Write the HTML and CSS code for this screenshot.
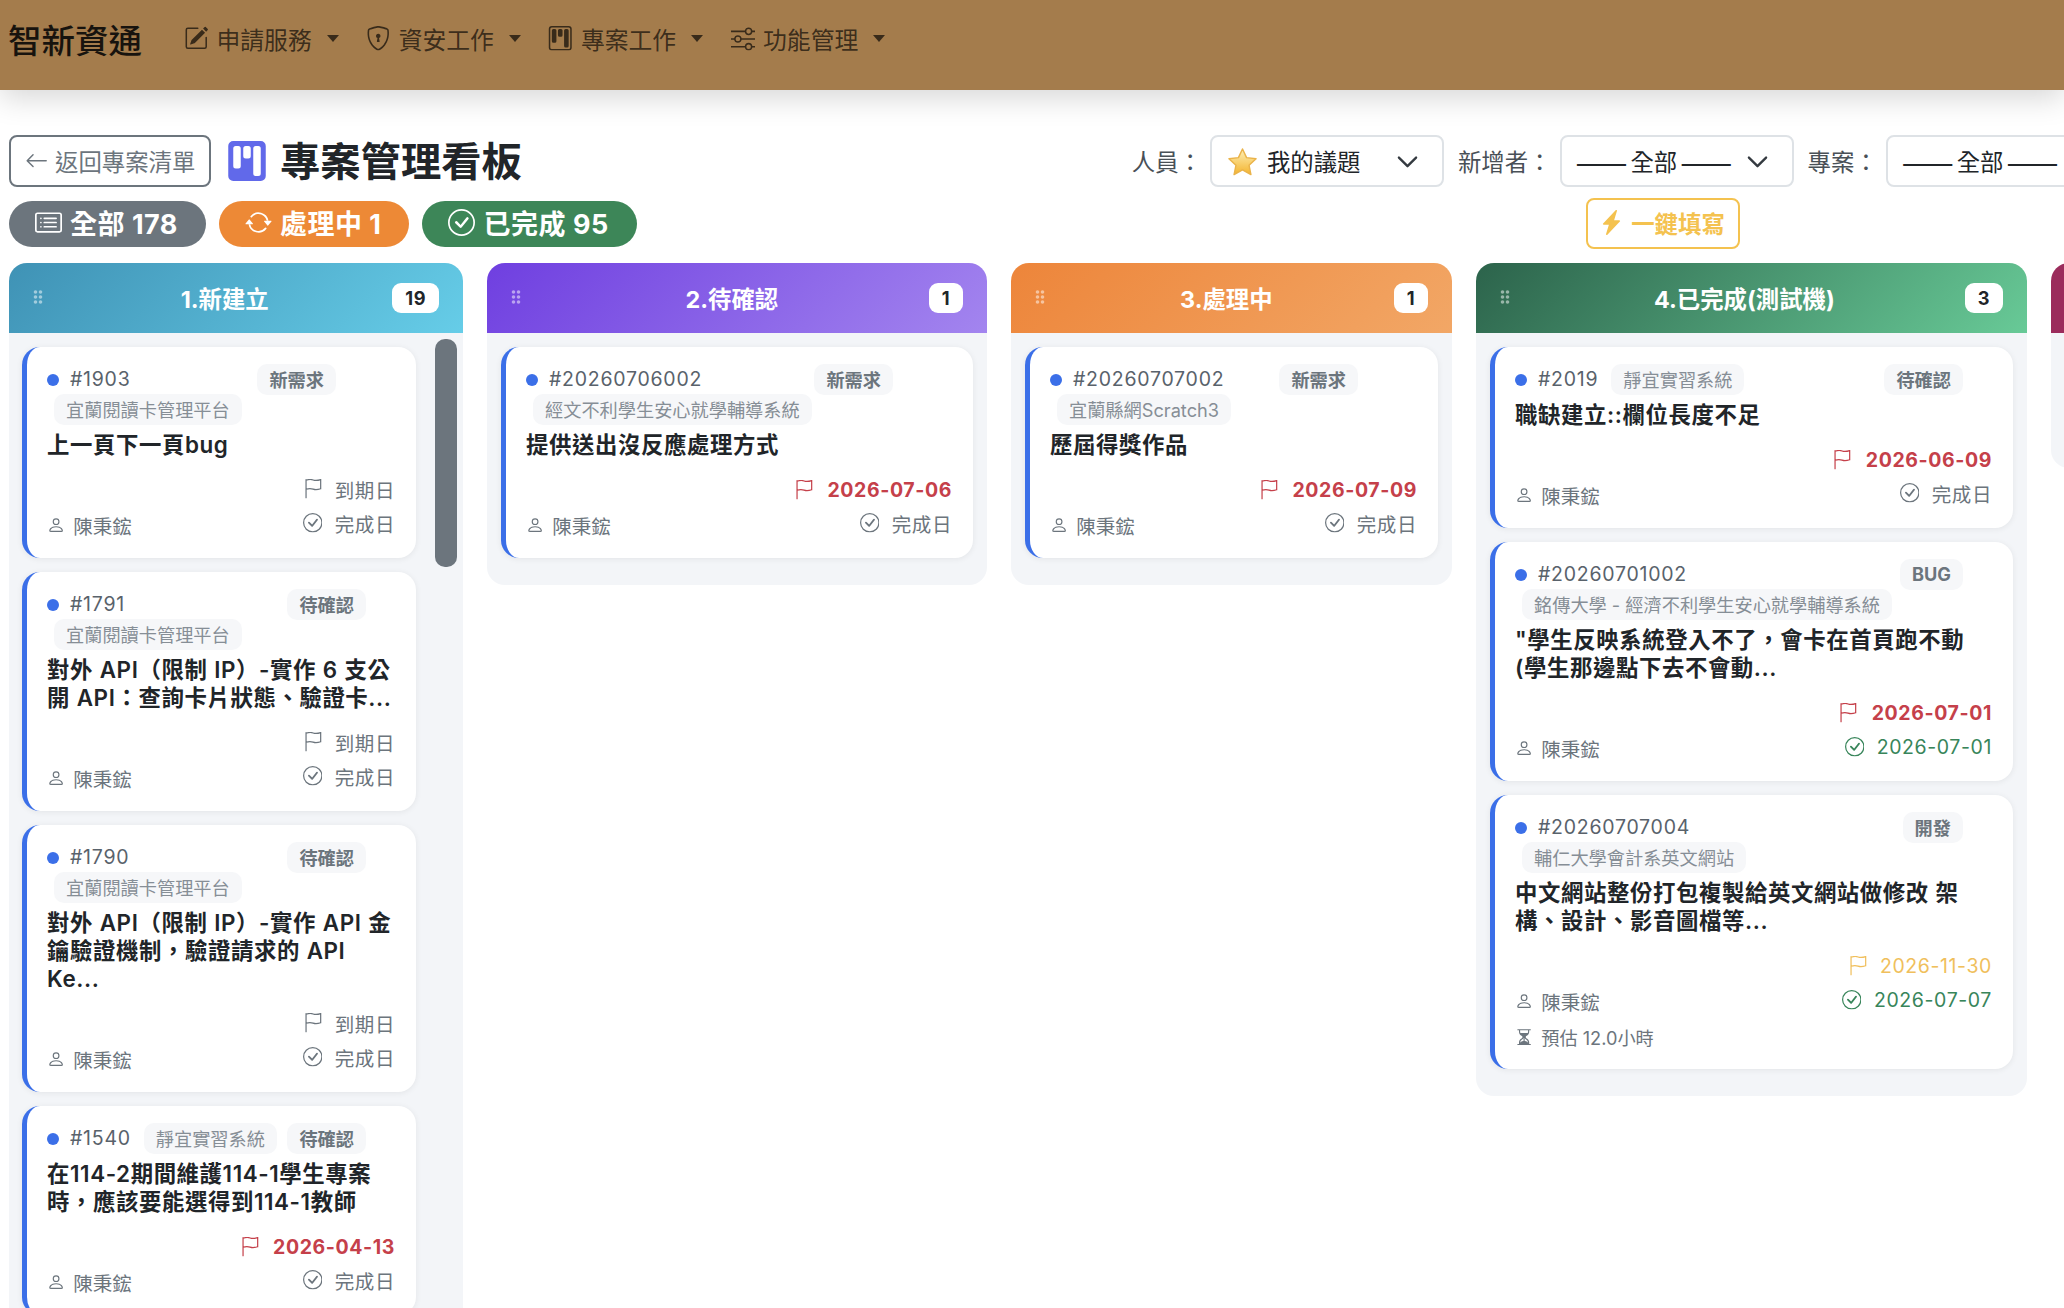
FILE: index.html
```html
<!DOCTYPE html>
<html lang="zh-Hant">
<head>
    <meta charset="UTF-8">
    <title>專案管理看板</title>
    <link rel="stylesheet" href="styles.css">
</head>
<body>
    <svg class="icon-defs" width="0" height="0">
        <symbol id="i-pencil" viewBox="0 0 16 16"><path d="M15.502 1.94a.5.5 0 0 1 0 .706L14.459 3.69l-2-2L13.502.646a.5.5 0 0 1 .707 0l1.293 1.293zm-1.75 2.456-2-2L4.939 9.21a.5.5 0 0 0-.121.196l-.805 2.414a.25.25 0 0 0 .316.316l2.414-.805a.5.5 0 0 0 .196-.12l6.813-6.814z"/><path fill-rule="evenodd" d="M1 13.5A1.5 1.5 0 0 0 2.5 15h11a1.5 1.5 0 0 0 1.5-1.5v-6a.5.5 0 0 0-1 0v6a.5.5 0 0 1-.5.5h-11a.5.5 0 0 1-.5-.5v-11a.5.5 0 0 1 .5-.5H9a.5.5 0 0 0 0-1H2.5A1.5 1.5 0 0 0 1 2.5z"/></symbol>
        <symbol id="i-shield" viewBox="0 0 16 16"><path d="M5.338 1.59a61 61 0 0 0-2.837.856.48.48 0 0 0-.328.39c-.554 4.157.726 7.19 2.253 9.188a10.7 10.7 0 0 0 2.287 2.233c.346.244.652.42.893.533q.18.085.293.118a1 1 0 0 0 .101.025 1 1 0 0 0 .1-.025q.114-.034.294-.118c.24-.113.547-.29.893-.533a10.7 10.7 0 0 0 2.287-2.233c1.527-1.997 2.807-5.031 2.253-9.188a.48.48 0 0 0-.328-.39c-.651-.213-1.75-.56-2.837-.855C9.552 1.29 8.531 1.067 8 1.067c-.53 0-1.552.223-2.662.524zM5.072.56C6.157.265 7.31 0 8 0s1.843.265 2.928.56c1.11.3 2.229.655 2.887.87a1.54 1.54 0 0 1 1.044 1.262c.596 4.477-.787 7.795-2.465 9.99a11.8 11.8 0 0 1-2.517 2.453 7 7 0 0 1-1.048.625c-.28.132-.581.24-.829.24s-.548-.108-.829-.24a7 7 0 0 1-1.048-.625 11.8 11.8 0 0 1-2.517-2.453C1.928 10.487.545 7.169 1.141 2.692A1.54 1.54 0 0 1 2.185 1.43 63 63 0 0 1 5.072.56"/><path d="M9.5 6.5a1.5 1.5 0 0 1-1 1.415l.385 1.99a.5.5 0 0 1-.491.595h-.788a.5.5 0 0 1-.49-.595l.384-1.99a1.5 1.5 0 1 1 2-1.415"/></symbol>
        <symbol id="i-kanban" viewBox="0 0 16 16"><path d="M13.5 1a1 1 0 0 1 1 1v12a1 1 0 0 1-1 1h-11a1 1 0 0 1-1-1V2a1 1 0 0 1 1-1zm-11-1a2 2 0 0 0-2 2v12a2 2 0 0 0 2 2h11a2 2 0 0 0 2-2V2a2 2 0 0 0-2-2z"/><path d="M6.5 3a1 1 0 0 1 1-1h1a1 1 0 0 1 1 1v3a1 1 0 0 1-1 1h-1a1 1 0 0 1-1-1zm-4 0a1 1 0 0 1 1-1h1a1 1 0 0 1 1 1v7a1 1 0 0 1-1 1h-1a1 1 0 0 1-1-1zm8 0a1 1 0 0 1 1-1h1a1 1 0 0 1 1 1v10a1 1 0 0 1-1 1h-1a1 1 0 0 1-1-1z"/></symbol>
        <symbol id="i-kanban-fill" viewBox="0 0 16 16"><path d="M2.5 0a2 2 0 0 0-2 2v12a2 2 0 0 0 2 2h11a2 2 0 0 0 2-2V2a2 2 0 0 0-2-2zm5 2h1a1 1 0 0 1 1 1v3a1 1 0 0 1-1 1h-1a1 1 0 0 1-1-1V3a1 1 0 0 1 1-1m-5 1a1 1 0 0 1 1-1h1a1 1 0 0 1 1 1v7a1 1 0 0 1-1 1h-1a1 1 0 0 1-1-1zm9-1h1a1 1 0 0 1 1 1v10a1 1 0 0 1-1 1h-1a1 1 0 0 1-1-1V3a1 1 0 0 1 1-1"/></symbol>
        <symbol id="i-sliders" viewBox="0 0 16 16"><path fill-rule="evenodd" d="M11.5 2a1.5 1.5 0 1 0 0 3 1.5 1.5 0 0 0 0-3M9.05 3a2.5 2.5 0 0 1 4.9 0H16v1h-2.05a2.5 2.5 0 0 1-4.9 0H0V3zM4.5 7a1.5 1.5 0 1 0 0 3 1.5 1.5 0 0 0 0-3M2.05 8a2.5 2.5 0 0 1 4.9 0H16v1H6.95a2.5 2.5 0 0 1-4.9 0H0V8zm9.45 4a1.5 1.5 0 1 0 0 3 1.5 1.5 0 0 0 0-3m-2.45 1a2.5 2.5 0 0 1 4.9 0H16v1h-2.05a2.5 2.5 0 0 1-4.9 0H0v-1z"/></symbol>
        <symbol id="i-back" viewBox="0 0 16 16"><path fill-rule="evenodd" d="M15 8a.5.5 0 0 0-.5-.5H2.707l3.147-3.146a.5.5 0 1 0-.708-.708l-4 4a.5.5 0 0 0 0 .708l4 4a.5.5 0 0 0 .708-.708L2.707 8.5H14.5A.5.5 0 0 0 15 8"/></symbol>
        <symbol id="i-list" viewBox="0 0 16 16"><path d="M14.5 3a.5.5 0 0 1 .5.5v9a.5.5 0 0 1-.5.5h-13a.5.5 0 0 1-.5-.5v-9a.5.5 0 0 1 .5-.5zm-13-1A1.5 1.5 0 0 0 0 3.5v9A1.5 1.5 0 0 0 1.5 14h13a1.5 1.5 0 0 0 1.5-1.5v-9A1.5 1.5 0 0 0 14.5 2z"/><path d="M5 8a.5.5 0 0 1 .5-.5h7a.5.5 0 0 1 0 1h-7A.5.5 0 0 1 5 8m0-2.5a.5.5 0 0 1 .5-.5h7a.5.5 0 0 1 0 1h-7a.5.5 0 0 1-.5-.5m0 5a.5.5 0 0 1 .5-.5h7a.5.5 0 0 1 0 1h-7a.5.5 0 0 1-.5-.5m-1-5a.5.5 0 1 1-1 0 .5.5 0 0 1 1 0M4 8a.5.5 0 1 1-1 0 .5.5 0 0 1 1 0m0 2.5a.5.5 0 1 1-1 0 .5.5 0 0 1 1 0"/></symbol>
        <symbol id="i-repeat" viewBox="0 0 16 16"><path d="M11.534 7h3.932a.25.25 0 0 1 .192.41l-1.966 2.36a.25.25 0 0 1-.384 0l-1.966-2.36a.25.25 0 0 1 .192-.41m-11 2h3.932a.25.25 0 0 0 .192-.41L2.692 6.23a.25.25 0 0 0-.384 0L.342 8.59A.25.25 0 0 0 .534 9"/><path fill-rule="evenodd" d="M8 3c-1.552 0-2.94.707-3.857 1.818a.5.5 0 1 1-.771-.636A6.002 6.002 0 0 1 13.917 7H12.9A5 5 0 0 0 8 3M3.1 9a5.002 5.002 0 0 0 8.757 2.182.5.5 0 1 1 .771.636A6.002 6.002 0 0 1 2.083 9z"/></symbol>
        <symbol id="i-check" viewBox="0 0 16 16"><path d="M8 15A7 7 0 1 1 8 1a7 7 0 0 1 0 14m0 1A8 8 0 1 0 8 0a8 8 0 0 0 0 16"/><path d="m10.97 4.97-.02.022-3.473 4.425-2.093-2.094a.75.75 0 0 0-1.06 1.06L6.97 11.03a.75.75 0 0 0 1.079-.02l3.992-4.99a.75.75 0 0 0-1.071-1.05"/></symbol>
        <symbol id="i-flag" viewBox="0 0 16 16"><path fill="none" stroke="currentColor" stroke-width="1" stroke-linecap="round" d="M2.5 15.5V.5M2.5 1C5 .2 6.5.1 8.3.8s3.5.6 6.2-.3V8c-2.7.9-4.4 1-6.2.3S5 7.5 2.5 8.4"/></symbol>
        <symbol id="i-person" viewBox="0 0 16 16"><path d="M8 8a3 3 0 1 0 0-6 3 3 0 0 0 0 6m2-3a2 2 0 1 1-4 0 2 2 0 0 1 4 0m4 8c0 1-1 1-1 1H3s-1 0-1-1 1-4 6-4 6 3 6 4m-1-.004c-.001-.246-.154-.986-.832-1.664C11.516 10.68 10.289 10 8 10s-3.516.68-4.168 1.332c-.678.678-.83 1.418-.832 1.664z"/></symbol>
        <symbol id="i-hourglass" viewBox="0 0 16 16"><path d="M2.5 15a.5.5 0 1 1 0-1h1v-1a4.5 4.5 0 0 1 2.557-4.06c.29-.139.443-.377.443-.59v-.7c0-.213-.154-.451-.443-.59A4.5 4.5 0 0 1 3.5 3V2h-1a.5.5 0 0 1 0-1h11a.5.5 0 0 1 0 1h-1v1a4.5 4.5 0 0 1-2.557 4.06c-.29.139-.443.377-.443.59v.7c0 .213.154.451.443.59A4.5 4.5 0 0 1 12.5 13v1h1a.5.5 0 0 1 0 1zm2-13v1c0 .537.12 1.045.337 1.5h6.326c.216-.455.337-.963.337-1.5V2zm3 6.35c0 .701-.478 1.236-1.011 1.492A3.5 3.5 0 0 0 4.5 13s.866-1.299 3-1.48zm1 0v3.17c2.134.181 3 1.48 3 1.48a3.5 3.5 0 0 0-1.989-3.158C8.978 9.586 8.5 9.052 8.5 8.351z"/></symbol>
        <symbol id="i-bolt" viewBox="0 0 16 16"><path d="M11.251.068a.5.5 0 0 1 .227.58L9.677 6.5H13a.5.5 0 0 1 .364.843l-8 8.5a.5.5 0 0 1-.842-.49L6.323 9.5H3a.5.5 0 0 1-.364-.843l8-8.5a.5.5 0 0 1 .615-.09z"/></symbol>
        <symbol id="i-grip" viewBox="0 0 10 16"><circle cx="2.5" cy="3" r="1.8"/><circle cx="7.5" cy="3" r="1.8"/><circle cx="2.5" cy="8" r="1.8"/><circle cx="7.5" cy="8" r="1.8"/><circle cx="2.5" cy="13" r="1.8"/><circle cx="7.5" cy="13" r="1.8"/></symbol>
        <symbol id="i-chevron" viewBox="0 0 16 16"><path fill="none" stroke="currentColor" stroke-width="1.5" stroke-linecap="round" stroke-linejoin="round" d="M2.5 5.5 8 11l5.5-5.5"/></symbol>
        <linearGradient id="star-fill" x1="0" y1="0" x2="0" y2="1"><stop offset="0" stop-color="#fdf0b8"/><stop offset="1" stop-color="#f4b42e"/></linearGradient>
    </svg>

    <nav class="navbar">
        <span class="brand">智新資通</span>
        <a class="nav-item"><svg class="nav-icon"><use href="#i-pencil"/></svg>申請服務<i class="caret"></i></a>
        <a class="nav-item"><svg class="nav-icon"><use href="#i-shield"/></svg>資安工作<i class="caret"></i></a>
        <a class="nav-item"><svg class="nav-icon"><use href="#i-kanban"/></svg>專案工作<i class="caret"></i></a>
        <a class="nav-item"><svg class="nav-icon"><use href="#i-sliders"/></svg>功能管理<i class="caret"></i></a>
    </nav>

    <main class="page">
        <div class="toolbar">
            <a class="back-btn"><svg class="btn-icon"><use href="#i-back"/></svg>返回專案清單</a>
            <svg class="title-icon"><use href="#i-kanban-fill"/></svg>
            <h1 class="page-title">專案管理看板</h1>
            <div class="filters">
                <label class="filter-label">人員：</label>
                <div class="select select-person">
                    <svg class="star" viewBox="0 0 32 30"><polygon points="16,2 20.2,11 30,12.2 22.8,18.9 24.7,28.5 16,23.7 7.3,28.5 9.2,18.9 2,12.2 11.8,11" fill="url(#star-fill)" stroke="#eab34a" stroke-width="1.5" stroke-linejoin="round"/></svg>
                    <span>我的議題</span>
                    <svg class="chevron"><use href="#i-chevron"/></svg>
                </div>
                <label class="filter-label">新增者：</label>
                <div class="select select-all">
                    <span class="dash">——</span><span>全部</span><span class="dash">——</span>
                    <svg class="chevron"><use href="#i-chevron"/></svg>
                </div>
                <label class="filter-label">專案：</label>
                <div class="select select-all">
                    <span class="dash">——</span><span>全部</span><span class="dash">——</span>
                    <svg class="chevron"><use href="#i-chevron"/></svg>
                </div>
            </div>
        </div>

        <div class="status-row">
            <a class="pill pill-gray"><svg class="pill-icon"><use href="#i-list"/></svg>全部 178</a>
            <a class="pill pill-orange"><svg class="pill-icon"><use href="#i-repeat"/></svg>處理中 1</a>
            <a class="pill pill-green"><svg class="pill-icon"><use href="#i-check"/></svg>已完成 95</a>
            <a class="fill-btn"><svg class="bolt-icon"><use href="#i-bolt"/></svg>一鍵填寫</a>
        </div>

        <div class="board">
            <section class="column col-new">
                <header class="col-head">
                    <svg class="grip"><use href="#i-grip"/></svg>
                    <h2 class="col-title">1.新建立</h2>
                    <span class="count">19</span>
                </header>
                <div class="col-body">
                    <article class="card">
                        <div class="card-head"><i class="dot"></i><span class="card-id">#1903</span><span class="status status-wide">新需求</span></div>
                        <div class="project project-row">宜蘭閱讀卡管理平台</div>
                        <h3 class="card-title">上一頁下一頁bug</h3>
                        <div class="date-row"><svg class="date-icon"><use href="#i-flag"/></svg>到期日</div>
                        <div class="foot"><span class="owner"><svg class="owner-icon"><use href="#i-person"/></svg>陳秉鋐</span><span class="date-row"><svg class="date-icon"><use href="#i-check"/></svg>完成日</span></div>
                    </article>
                    <article class="card">
                        <div class="card-head"><i class="dot"></i><span class="card-id">#1791</span><span class="status">待確認</span></div>
                        <div class="project project-row">宜蘭閱讀卡管理平台</div>
                        <h3 class="card-title">對外 API（限制 IP）-實作 6 支公開 API：查詢卡片狀態、驗證卡...</h3>
                        <div class="date-row"><svg class="date-icon"><use href="#i-flag"/></svg>到期日</div>
                        <div class="foot"><span class="owner"><svg class="owner-icon"><use href="#i-person"/></svg>陳秉鋐</span><span class="date-row"><svg class="date-icon"><use href="#i-check"/></svg>完成日</span></div>
                    </article>
                    <article class="card">
                        <div class="card-head"><i class="dot"></i><span class="card-id">#1790</span><span class="status">待確認</span></div>
                        <div class="project project-row">宜蘭閱讀卡管理平台</div>
                        <h3 class="card-title">對外 API（限制 IP）-實作 API 金鑰驗證機制，驗證請求的 API Ke...</h3>
                        <div class="date-row"><svg class="date-icon"><use href="#i-flag"/></svg>到期日</div>
                        <div class="foot"><span class="owner"><svg class="owner-icon"><use href="#i-person"/></svg>陳秉鋐</span><span class="date-row"><svg class="date-icon"><use href="#i-check"/></svg>完成日</span></div>
                    </article>
                    <article class="card">
                        <div class="card-head"><i class="dot"></i><span class="card-id">#1540</span><span class="project">靜宜實習系統</span><span class="status">待確認</span></div>
                        <h3 class="card-title">在114-2期間維護114-1學生專案時，應該要能選得到114-1教師</h3>
                        <div class="date-row date-overdue"><svg class="date-icon"><use href="#i-flag"/></svg>2026-04-13</div>
                        <div class="foot"><span class="owner"><svg class="owner-icon"><use href="#i-person"/></svg>陳秉鋐</span><span class="date-row"><svg class="date-icon"><use href="#i-check"/></svg>完成日</span></div>
                    </article>
                </div>
                <div class="scroll-thumb"></div>
            </section>

            <section class="column col-confirm">
                <header class="col-head">
                    <svg class="grip"><use href="#i-grip"/></svg>
                    <h2 class="col-title">2.待確認</h2>
                    <span class="count">1</span>
                </header>
                <div class="col-body">
                    <article class="card">
                        <div class="card-head"><i class="dot"></i><span class="card-id">#20260706002</span><span class="status status-wide">新需求</span></div>
                        <div class="project project-row">經文不利學生安心就學輔導系統</div>
                        <h3 class="card-title">提供送出沒反應處理方式</h3>
                        <div class="date-row date-overdue"><svg class="date-icon"><use href="#i-flag"/></svg>2026-07-06</div>
                        <div class="foot"><span class="owner"><svg class="owner-icon"><use href="#i-person"/></svg>陳秉鋐</span><span class="date-row"><svg class="date-icon"><use href="#i-check"/></svg>完成日</span></div>
                    </article>
                </div>
            </section>

            <section class="column col-doing">
                <header class="col-head">
                    <svg class="grip"><use href="#i-grip"/></svg>
                    <h2 class="col-title">3.處理中</h2>
                    <span class="count">1</span>
                </header>
                <div class="col-body">
                    <article class="card">
                        <div class="card-head"><i class="dot"></i><span class="card-id">#20260707002</span><span class="status status-wide">新需求</span></div>
                        <div class="project project-row">宜蘭縣網Scratch3</div>
                        <h3 class="card-title">歷屆得獎作品</h3>
                        <div class="date-row date-overdue"><svg class="date-icon"><use href="#i-flag"/></svg>2026-07-09</div>
                        <div class="foot"><span class="owner"><svg class="owner-icon"><use href="#i-person"/></svg>陳秉鋐</span><span class="date-row"><svg class="date-icon"><use href="#i-check"/></svg>完成日</span></div>
                    </article>
                </div>
            </section>

            <section class="column col-done">
                <header class="col-head">
                    <svg class="grip"><use href="#i-grip"/></svg>
                    <h2 class="col-title">4.已完成(測試機)</h2>
                    <span class="count">3</span>
                </header>
                <div class="col-body">
                    <article class="card">
                        <div class="card-head"><i class="dot"></i><span class="card-id">#2019</span><span class="project">靜宜實習系統</span><span class="status">待確認</span></div>
                        <h3 class="card-title">職缺建立::欄位長度不足</h3>
                        <div class="date-row date-overdue"><svg class="date-icon"><use href="#i-flag"/></svg>2026-06-09</div>
                        <div class="foot"><span class="owner"><svg class="owner-icon"><use href="#i-person"/></svg>陳秉鋐</span><span class="date-row"><svg class="date-icon"><use href="#i-check"/></svg>完成日</span></div>
                    </article>
                    <article class="card">
                        <div class="card-head"><i class="dot"></i><span class="card-id">#20260701002</span><span class="status">BUG</span></div>
                        <div class="project project-row">銘傳大學 - 經濟不利學生安心就學輔導系統</div>
                        <h3 class="card-title">"學生反映系統登入不了，會卡在首頁跑不動<br>(學生那邊點下去不會動...</h3>
                        <div class="date-row date-overdue"><svg class="date-icon"><use href="#i-flag"/></svg>2026-07-01</div>
                        <div class="foot"><span class="owner"><svg class="owner-icon"><use href="#i-person"/></svg>陳秉鋐</span><span class="date-row date-done"><svg class="date-icon"><use href="#i-check"/></svg>2026-07-01</span></div>
                    </article>
                    <article class="card">
                        <div class="card-head"><i class="dot"></i><span class="card-id">#20260707004</span><span class="status">開發</span></div>
                        <div class="project project-row">輔仁大學會計系英文網站</div>
                        <h3 class="card-title">中文網站整份打包複製給英文網站做修改 架構、設計、影音圖檔等...</h3>
                        <div class="date-row date-soon"><svg class="date-icon"><use href="#i-flag"/></svg>2026-11-30</div>
                        <div class="foot"><span class="owner"><svg class="owner-icon"><use href="#i-person"/></svg>陳秉鋐</span><span class="date-row date-done"><svg class="date-icon"><use href="#i-check"/></svg>2026-07-07</span></div>
                        <div class="estimate"><svg class="owner-icon"><use href="#i-hourglass"/></svg>預估 12.0小時</div>
                    </article>
                </div>
            </section>

            <section class="column col-next">
                <header class="col-head"></header>
                <div class="col-body"></div>
            </section>
        </div>
    </main>
</body>
</html>
```

FILE: styles.css
```css
/* page */
:root {
    --gray: #6c757d;
    --text: #212529;
    --blue: #3b6fe8;
    --col-bg: #f3f5f8;
}

* {
    margin: 0;
    padding: 0;
    box-sizing: border-box;
}

body {
    width: 100vw;
    height: 100vh;
    overflow: hidden;
    background: #fff;
    color: var(--text);
    font-family: Inter, "Noto Sans CJK TC", sans-serif;
    font-size: 18.2px;
}

.icon-defs {
    position: absolute;
}

svg {
    fill: currentColor;
    flex-shrink: 0;
}

/* navbar */
.navbar {
    height: 90px;
    padding: 0 8px 13px;
    display: flex;
    align-items: center;
    background: #a47c4c;
    color: rgba(0, 0, 0, 0.65);
    font-size: 23.8px;
    box-shadow: 0 8px 28px rgba(0, 0, 0, 0.16);
}

.brand {
    margin-right: 42px;
    font-size: 33.5px;
    font-weight: 500;
    color: #17130e;
}

.nav-item {
    display: flex;
    align-items: center;
    margin-right: 27.5px;
}

.nav-icon {
    width: 24.5px;
    height: 24.5px;
    margin-right: 8px;
}

.caret {
    width: 0;
    height: 0;
    margin-left: 15px;
    border-top: 7px solid currentColor;
    border-left: 6.5px solid transparent;
    border-right: 6.5px solid transparent;
}

/* toolbar */
.page {
    padding: 45px 9px 0;
}

.toolbar {
    display: flex;
    align-items: center;
    white-space: nowrap;
    font-size: 23.4px;
}

.back-btn {
    height: 52px;
    width: 202px;
    flex-shrink: 0;
    display: flex;
    align-items: center;
    justify-content: center;
    gap: 7px;
    border: 2px solid var(--gray);
    border-radius: 8px;
    color: var(--gray);
}

.btn-icon {
    width: 23.4px;
    height: 23.4px;
}

.title-icon {
    width: 40px;
    height: 40px;
    margin-left: 16px;
    color: #6169ea;
}

.page-title {
    margin-left: 13px;
    padding-top: 2px;
    font-size: 40.3px;
    line-height: 50px;
    font-weight: 700;
}

.filters {
    margin-left: 610px;
    display: flex;
    align-items: center;
    flex-shrink: 0;
}

.filter-label {
    color: #495057;
}

.select {
    height: 52px;
    width: 234px;
    margin: 0 14px 0 8px;
    padding: 0 22px 0 20px;
    flex-shrink: 0;
    display: flex;
    align-items: center;
    border: 2px solid #dee2e6;
    border-radius: 8px;
    color: var(--text);
}

.select-all {
    padding-left: 14px;
    gap: 3px;
}

.dash {
    font-family: "Noto Sans CJK TC", sans-serif;
    font-size: 31px;
    line-height: 40px;
}

.star {
    width: 31px;
    height: 29px;
    margin-right: 9px;
    margin-left: -5px;
}

.chevron {
    width: 25px;
    height: 25px;
    margin-left: auto;
    color: #343a40;
}

/* status row */
.status-row {
    margin-top: 11px;
    display: flex;
    align-items: center;
    gap: 13px;
    white-space: nowrap;
}

.pill {
    height: 46px;
    padding: 0 28px 2px 26px;
    display: flex;
    align-items: center;
    gap: 8px;
    border-radius: 23px;
    color: #fff;
    font-size: 27px;
    font-weight: 700;
    letter-spacing: 0.5px;
}

.pill-icon {
    width: 27px;
    height: 27px;
}

.pill-gray {
    background: var(--gray);
}

.pill-orange {
    background: #ed8936;
}

.pill-green {
    background: #3d8658;
}

.fill-btn {
    height: 51px;
    width: 154px;
    margin-left: auto;
    margin-right: 315px;
    padding-bottom: 2px;
    display: flex;
    align-items: center;
    justify-content: center;
    gap: 7px;
    border: 2px solid #f4c24f;
    border-radius: 8px;
    color: #f4c24f;
    font-size: 23.4px;
    font-weight: 700;
}

.bolt-icon {
    width: 25px;
    height: 25px;
    margin-left: -2px;
}

/* board */
.board {
    margin-top: 14px;
    display: flex;
    align-items: flex-start;
    gap: 24px;
}

.column {
    position: relative;
    flex-shrink: 0;
}

.col-new {
    width: 454px;
}

.col-confirm {
    width: 500px;
}

.col-doing {
    width: 441px;
}

.col-done {
    width: 551px;
}

.col-next {
    width: 400px;
}

.col-head {
    height: 70px;
    padding: 0 24px;
    display: flex;
    align-items: center;
    border-radius: 18px 18px 0 0;
    color: #fff;
}

.col-new .col-head {
    background: linear-gradient(135deg, #3f92b5, #66cde8);
}

.col-confirm .col-head {
    background: linear-gradient(135deg, #6f3fe0, #a385ef);
}

.col-doing .col-head {
    background: linear-gradient(135deg, #ed853a, #f2a766);
}

.col-done .col-head {
    background: linear-gradient(135deg, #2c634b, #68ca97);
}

.col-next .col-head {
    background: #9b2c5c;
}

.grip {
    width: 10px;
    height: 16px;
    opacity: 0.5;
    margin-top: -3px;
}

.col-title {
    flex: 1;
    margin-left: 14px;
    text-align: center;
    font-size: 23.4px;
    font-weight: 700;
}

.count {
    height: 30px;
    min-width: 34px;
    padding: 0 13px;
    display: flex;
    align-items: center;
    justify-content: center;
    border-radius: 9px;
    background: #fff;
    color: var(--text);
    font-size: 18.2px;
    font-weight: 700;
    letter-spacing: 0.5px;
}

.col-body {
    padding: 14px 14px 27px;
    display: flex;
    flex-direction: column;
    gap: 14px;
    background: var(--col-bg);
    border-radius: 0 0 18px 18px;
}

.col-new .col-body {
    padding: 14px 47px 27px 13px;
}

.col-next .col-body {
    height: 135px;
}

.scroll-thumb {
    position: absolute;
    top: 76px;
    right: 6px;
    width: 22px;
    height: 228px;
    border-radius: 10px;
    background: var(--gray);
}

/* cards */
.card {
    padding: 17px 21px 17px 20px;
    background: #fff;
    border-left: 5px solid var(--blue);
    border-radius: 18px;
    box-shadow: 0 1px 6px rgba(0, 0, 0, 0.07);
}

.card-head {
    height: 31px;
    display: flex;
    align-items: center;
}

.dot {
    width: 12px;
    height: 12px;
    margin-right: 11px;
    border-radius: 50%;
    background: var(--blue);
}

.card-id {
    padding-bottom: 2px;
    font-size: 19.5px;
    letter-spacing: 0.75px;
    color: #59626b;
}

.status,
.project {
    height: 31px;
    padding: 0 12px 2px;
    display: flex;
    align-items: center;
    border-radius: 10px;
    background: #f6f7f9;
    color: var(--gray);
    white-space: nowrap;
}

.status {
    margin-left: auto;
    margin-right: 29px;
    font-weight: 700;
}

.status-wide {
    margin-right: 59px;
}

.project {
    margin-left: 13px;
    color: #868e96;
}

.project-row {
    width: fit-content;
    margin: -1px 0 0 7px;
}

.card-title {
    margin-top: 6px;
    font-size: 22.4px;
    line-height: 28px;
    font-weight: 600;
    letter-spacing: 0.6px;
    word-spacing: 0.5px;
    color: var(--text);
}

.date-row {
    height: 34px;
    padding-bottom: 2px;
    display: flex;
    align-items: center;
    justify-content: flex-end;
    gap: 12.5px;
    font-size: 19.5px;
    letter-spacing: 0.6px;
    color: var(--gray);
}

.card-title + .date-row {
    margin-top: 14px;
}

.date-icon {
    width: 19.5px;
    height: 19.5px;
}

.date-overdue {
    gap: 14px;
    padding-bottom: 0;
    color: #c5404a;
    font-weight: 700;
}

.date-done {
    padding-bottom: 0;
    color: #38855a;
}

.date-soon {
    padding-bottom: 0;
    color: #f0bf5c;
}

.foot {
    display: flex;
    justify-content: space-between;
}

.owner,
.estimate {
    display: flex;
    align-items: center;
    gap: 8px;
    font-size: 19.5px;
    color: var(--gray);
}

.owner {
    padding-top: 2px;
}

.owner-icon {
    width: 18.2px;
    height: 18.2px;
}

.estimate {
    height: 35px;
    padding-top: 5px;
    font-size: 18.2px;
}
```
